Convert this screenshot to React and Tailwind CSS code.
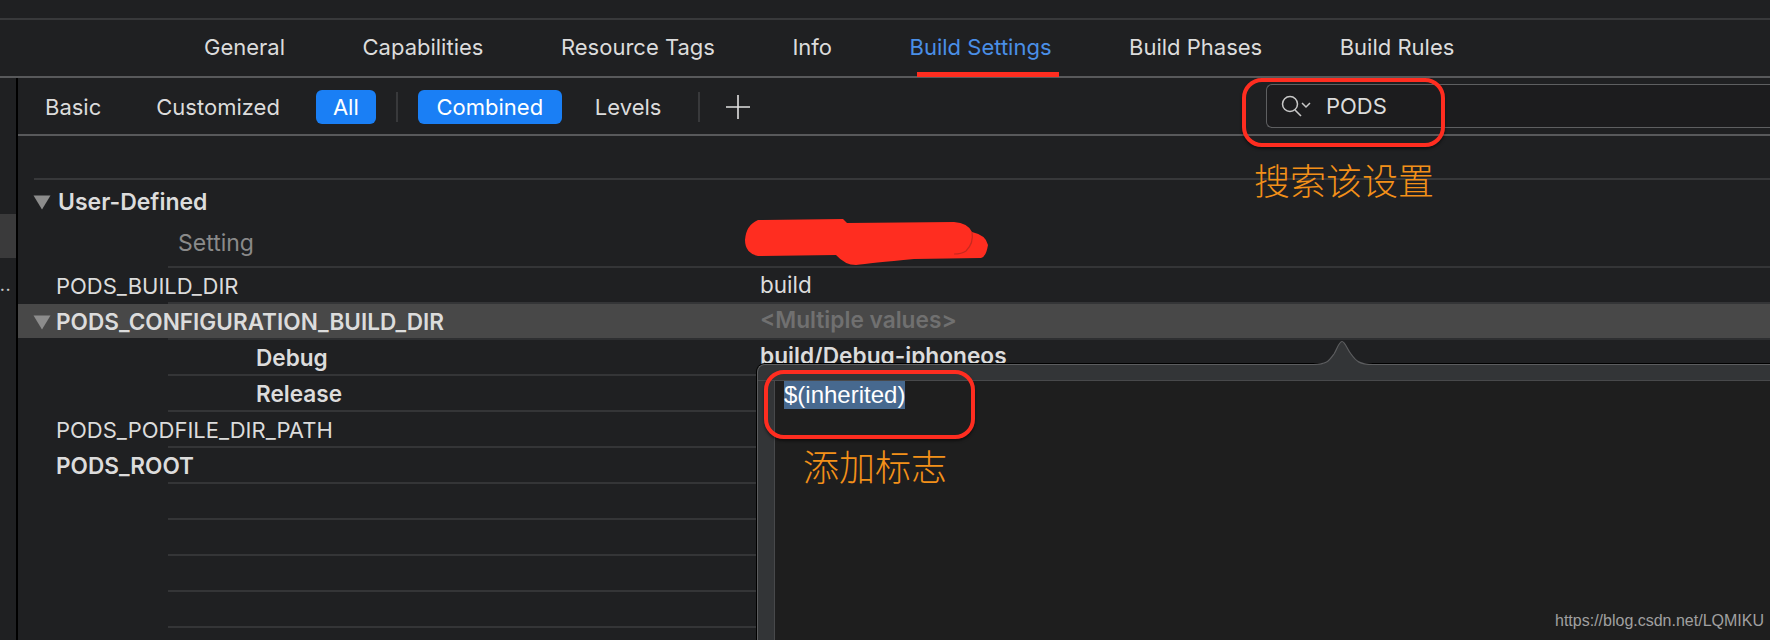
import React from 'react';

const SANS = "font-['Inter','Noto_Sans_CJK_SC',sans-serif]";

const TABS = ['General', 'Capabilities', 'Resource Tags', 'Info', 'Build Settings', 'Build Phases', 'Build Rules'];

function Triangle() {
  return (
    <svg width="18" height="15" viewBox="0 0 18 15" className="shrink-0">
      <path d="M0.5 0.5H17.5L9 14.5Z" fill="#8c8c8c" />
    </svg>
  );
}

function Row({ label, value, indent = 38, bold = false, boldValue = false, active = false, muted = false, open = false }) {
  return (
    <div className="h-[36px] flex flex-col">
      <div className={`flex-1 flex items-center min-h-0 pt-[2px] ${active ? 'bg-[#484848]' : ''}`}>
        <div className={`w-[742px] shrink-0 flex items-center ${bold ? 'text-[22.6px] font-semibold' : 'text-[22px]'} text-[#dcdcdc]`} style={{ paddingLeft: open ? 15 : indent }}>
          {open && <span className="mr-[5px] flex"><Triangle /></span>}
          {label}
        </div>
        {value && (
          <div className={`${boldValue ? 'text-[22.7px] font-semibold pb-[4px]' : 'text-[22.5px] pb-[2px]'} ${muted ? 'text-[#707070]' : 'text-[#dcdcdc]'}`}>{value}</div>
        )}
      </div>
      <div className={`h-[2px] ml-[150px] ${active ? 'bg-[#2e2f31]' : 'bg-[#343537]'}`} />
    </div>
  );
}

export default function App() {
  return (
    <div className={`relative w-[1770px] h-[640px] overflow-hidden bg-[#1f2022] flex flex-col ${SANS}`}>
      <div className="h-[20px] shrink-0 border-b-2 border-[#38393b]" />

      <div className="h-[58px] shrink-0 border-b-2 border-[#58595b] flex items-center pl-[204px] pb-[2px] gap-[77.5px] text-[22px] text-[#dcdcdc]">
        {TABS.map((t) => (
          <span key={t} className={t === 'Build Settings' ? 'text-[#4a8fe7]' : ''}>{t}</span>
        ))}
      </div>

      <div className="flex-1 flex min-h-0">
        <div className="w-[18px] shrink-0 border-r-2 border-black flex flex-col">
          <div className="h-[136px] shrink-0" />
          <div className="h-[44px] shrink-0 bg-[#3a3a3b]" />
          <div className="mt-[18px] text-[14px] leading-[20px] font-bold text-[#c8c8c8] tracking-[1px]">..</div>
        </div>

        <div className="flex-1 min-w-0 flex flex-col">
          <div className="h-[58px] shrink-0 border-b-2 border-[#58595b] flex items-center pl-[27px] pt-[2px] text-[22px] text-[#dcdcdc]">
            <span>Basic</span>
            <span className="ml-[55px]">Customized</span>
            <span className="ml-[36px] w-[60px] h-[34px] bg-[#1a7ff5] rounded-[6px] text-white flex items-center justify-center">All</span>
            <span className="ml-[20px] w-[2px] h-[30px] bg-[#38393b]" />
            <span className="ml-[20px] w-[144px] h-[34px] bg-[#1a7ff5] rounded-[6px] text-white flex items-center justify-center">Combined</span>
            <span className="ml-[33px]">Levels</span>
            <span className="ml-[37px] w-[2px] h-[30px] bg-[#38393b]" />
            <svg width="24" height="24" viewBox="0 0 24 24" className="ml-[26px]">
              <path d="M12 0V24M0 12H24" stroke="#e0e0e0" strokeWidth="1.6" />
            </svg>
            <div className="ml-auto mb-[2px] w-[504px] h-[44px] rounded-l-[6px] border border-r-0 border-[#5e5f61] bg-[#1c1c1e] flex items-center pl-[14px]">
              <svg width="32" height="24" viewBox="0 0 32 24" className="shrink-0">
                <circle cx="9" cy="10" r="7.5" fill="none" stroke="#c8c8c8" strokeWidth="1.5" />
                <path d="M14 16L20 22" stroke="#c8c8c8" strokeWidth="1.6" />
                <path d="M21 9L25 13L29 9" fill="none" stroke="#c8c8c8" strokeWidth="1.5" />
              </svg>
              <span className="ml-[13px]">PODS</span>
            </div>
          </div>

          <div className="h-[44px] shrink-0 flex flex-col justify-end">
            <div className="h-[2px] ml-[16px] bg-[#37383a]" />
          </div>

          <div className="h-[44px] shrink-0 flex items-center pl-[15px] text-[23px] font-semibold text-[#dcdcdc]">
            <Triangle />
            <span className="ml-[7px]">User-Defined</span>
          </div>

          <div className="h-[44px] shrink-0 flex flex-col">
            <div className="flex-1 flex items-center text-[23px] pb-[4px]">
              <span className="w-[742px] pl-[160px] text-[#8a8a8a]">Setting</span>
            </div>
            <div className="h-[2px] ml-[150px] bg-[#343537]" />
          </div>

          <Row label="PODS_BUILD_DIR" value="build" />
          <Row label="PODS_CONFIGURATION_BUILD_DIR" value="<Multiple values>" bold boldValue active muted open />
          <Row label="Debug" value="build/Debug-iphoneos" bold boldValue indent={238} />
          <Row label="Release" bold indent={238} />
          <Row label="PODS_PODFILE_DIR_PATH" />
          <Row label="PODS_ROOT" bold />
          <Row label="" />
          <Row label="" />
          <Row label="" />
          <Row label="" />
        </div>
      </div>

      {/* popover over the value column */}
      <div className="absolute left-[757px] top-[364px] right-0 bottom-0 rounded-tl-[8px] border-l border-t border-[#5c5d5f] shadow-[0_-1px_0_#000,-1px_0_0_#000] bg-[#333537] flex flex-col">
        <svg width="60" height="26" viewBox="0 0 60 26" className="absolute left-[555px] top-[-25px]">
          <path d="M0 24.5C14 24.5 16 21 21 14C24 9 26 1.5 29 1.5C32 1.5 34 9 38 14C43 21 46 24.5 60 24.5V26H0Z" fill="#333537" />
          <path d="M0 24.5C14 24.5 16 21 21 14C24 9 26 1.5 29 1.5C32 1.5 34 9 38 14C43 21 46 24.5 60 24.5" fill="none" stroke="#5c5d5f" strokeWidth="1.2" />
        </svg>
        <div className="h-[16px] shrink-0 border-b border-[#48494b]" />
        <div className="flex-1 flex min-h-0">
          <div className="w-[17px] shrink-0 border-r border-[#48494b]" />
          <div className="flex-1 bg-[#1e1e1e] pl-[9px]">
            <span className="inline-block h-[28px] leading-[28px] bg-[#47698f] text-white text-[24px] font-['Liberation_Sans',sans-serif]">$(inherited)</span>
          </div>
        </div>
      </div>

      {/* red marks and notes drawn on the screenshot */}
      <div className="absolute left-[917px] top-[72px] w-[142px] h-[5px] bg-[#ff2d20]" />
      <div className="absolute left-[1242px] top-[78px] w-[203px] h-[69px] rounded-[20px] border-[4px] border-[#ff2d20] shadow-[0_2px_3px_rgba(0,0,0,0.5)]" />
      <div className="absolute left-[764px] top-[370px] w-[211px] h-[69px] rounded-[20px] border-[4px] border-[#ff2d20] shadow-[0_2px_3px_rgba(0,0,0,0.5)]" />
      <svg width="252" height="55" viewBox="0 0 252 55" className="absolute left-[740px] top-[215px]">
        <path d="M5 25Q6 10 18 5L103 4L107 8L214 7Q228 8 232 17Q246 20 248 30Q246 42 241 43L174 44Q130 48 116 50Q105 50 96 40L18 41Q5 38 5 25Z" fill="#ff2d20" />
        <path d="M232 17Q234 28 226 36Q222 39 214 39" fill="none" stroke="#c8291f" strokeWidth="1.2" />
      </svg>
      <div className="absolute left-[1254px] top-[157px] text-[36px] leading-[44px] font-light text-[#f39019] font-['Noto_Sans_CJK_SC',sans-serif]">搜索该设置</div>
      <div className="absolute left-[803px] top-[443px] text-[36px] leading-[44px] font-light text-[#f39019] font-['Noto_Sans_CJK_SC',sans-serif]">添加标志</div>
      <div className="absolute left-[1555px] top-[611px] text-[16px] leading-[20px] text-[#a0a0a0] font-['Liberation_Sans',sans-serif]">https://blog.csdn.net/LQMIKU</div>
    </div>
  );
}
